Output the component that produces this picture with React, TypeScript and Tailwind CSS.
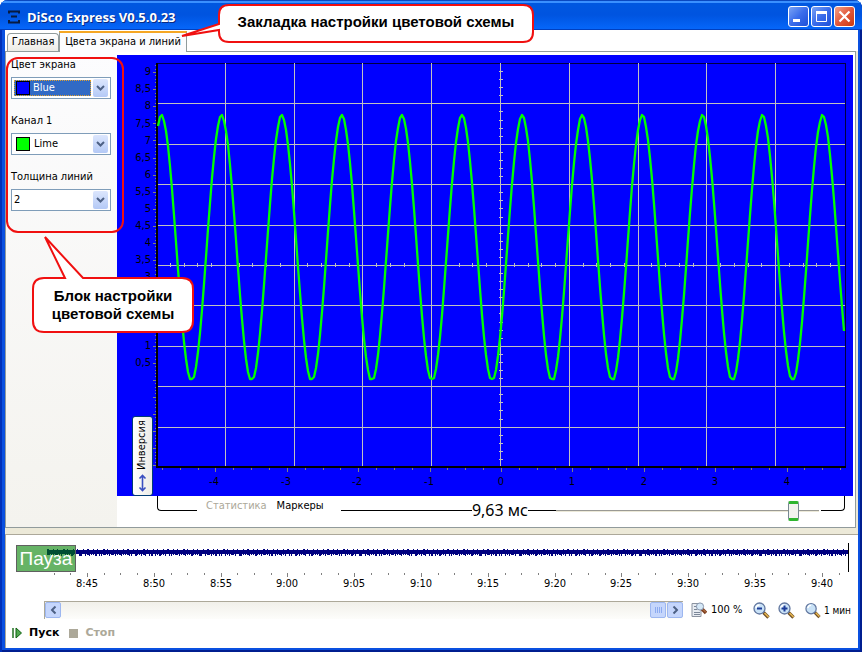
import type { ReactNode } from "react";

const UI_FONT = "font-['DejaVu_Sans_Condensed','DejaVu_Sans',sans-serif]";

const PLOT = { left: 40, top: 8, right: 728, bottom: 412 };
const SPLIT_X = 68.8;
const SPLIT_Y = 40.4;
const CENTER_X = 384;
const CENTER_Y = 210;

function range(from: number, to: number): number[] {
  return Array.from({ length: to - from + 1 }, (_, i) => from + i);
}

const LEVEL_LABELS = [...range(1, 2), ...range(6, 18)];

function signalPoints(): string {
  const points: string[] = [];
  for (let x = PLOT.left + 1; x <= PLOT.right; x += 2) {
    const phase = ((x - 44.5) / 60.1) * 2 * Math.PI;
    const ripple = Math.cos(phase) > 0.97 ? 3 * Math.cos(phase * 3) - 1 : 0;
    const y = 194 - 132 * Math.cos(phase) - ripple;
    points.push(`${x},${Math.round(Math.min(324, y))}`);
  }
  return points.join(" ");
}

function Oscillogram() {
  return (
    <svg viewBox="0 0 736 441" className="block w-full bg-[#0000ff]" role="img" aria-label="Осциллограмма">
      <g shapeRendering="crispEdges">
        <path d="M40 8.5H728.5V412" fill="none" stroke="#000040" />
        <g stroke="#c0c0c0">
          {range(1, 9).map((i) => (
            <line key={`v${i}`} x1={Math.round(PLOT.left + i * SPLIT_X) - 0.5} x2={Math.round(PLOT.left + i * SPLIT_X) - 0.5} y1="8" y2="412" />
          ))}
          {range(1, 9).map((i) => (
            <line key={`h${i}`} x1="40" x2="728" y1={Math.round(PLOT.top + i * SPLIT_Y) + 0.5} y2={Math.round(PLOT.top + i * SPLIT_Y) + 0.5} />
          ))}
          {range(1, 49).map((i) => (
            <line key={`cy${i}`} x1="382" x2="386" y1={Math.round(PLOT.top + i * 8.08) + 0.5} y2={Math.round(PLOT.top + i * 8.08) + 0.5} />
          ))}
          {range(1, 49).map((i) => (
            <line key={`cx${i}`} x1={Math.round(PLOT.left + i * 13.76) - 0.5} x2={Math.round(PLOT.left + i * 13.76) - 0.5} y1={CENTER_Y - 2} y2={CENTER_Y + 2} />
          ))}
        </g>
        <g stroke="#808080">
          {range(-2, 115).map((i) => {
            const y = Math.round(17 + i * 3.42) + 0.5;
            return y < 412 ? <line key={i} x1={i % 5 === 0 ? 36 : 38} x2="40" y1={y} y2={y} /> : null;
          })}
          {range(-19, 19).map((i) => {
            const x = Math.round(CENTER_X + i * 17.85) + 0.5;
            return <line key={i} x1={x} x2={x} y1="413" y2={i % 4 === 0 ? 417 : 415} />;
          })}
        </g>
        <path d="M40 8V412H729" fill="none" stroke="#000000" strokeWidth="2" />
      </g>
      <polyline points={signalPoints()} fill="none" stroke="#00ff00" strokeWidth="2.300" strokeLinejoin="round" />
      <g className={UI_FONT} fontSize="11" fill="#000000">
        {LEVEL_LABELS.map((i) => (
          <text key={i} x="34" y={Math.round(328 - i * 17.1)} textAnchor="end">
            {String(i / 2).replace(".", ",")}
          </text>
        ))}
        {range(-4, 4).map((i) => (
          <text key={i} x={Math.round(CENTER_X + i * 71.4) - (i < 0 ? 1 : 0)} y="430" textAnchor="middle">
            {i}
          </text>
        ))}
      </g>
    </svg>
  );
}

function Timeline() {
  const times = ["8:45", "8:50", "8:55", "9:00", "9:05", "9:10", "9:15", "9:20", "9:25", "9:30", "9:35", "9:40"];
  return (
    <svg viewBox="0 0 852 50" className="block w-full" role="img" aria-label="Запись сигнала">
      <g shapeRendering="crispEdges">
        <rect x="41" y="7" width="801" height="4" fill="#000080" />
        {range(0, 399).map((i) => (
          <rect key={i} x={41 + i * 2} y={(i * 7) % 5 < 2 ? 6 : 7} width={(i * 11) % 4 === 0 ? 2 : 1} height={(i * 5) % 7 < 5 ? 6 : 5} fill="#000080" />
        ))}
        <line x1="842.5" x2="842.5" y1="0" y2="29" stroke="#000000" />
        {range(-2, 45).map((i) => {
          const x = Math.round(81 + i * 16.7) + 0.5;
          return x < 842 ? <line key={i} x1={x} x2={x} y1="30" y2={i % 4 === 0 ? 34 : 32} stroke="#808080" /> : null;
        })}
      </g>
      <g className={UI_FONT} fontSize="11" textAnchor="middle">
        {times.map((time, i) => (
          <text key={time} x={Math.round(81 + i * 66.8)} y="44">
            {time}
          </text>
        ))}
      </g>
    </svg>
  );
}

function Chevron({ className }: { className: string }) {
  return (
    <svg viewBox="0 0 9 6" className={className} fill="none" stroke="#4d6185" strokeWidth="2">
      <path d="M1 1L4.500 4.500L8 1" />
    </svg>
  );
}

function Field({ id, label, value, swatch, active }: { id: string; label: string; value: string; swatch?: string; active?: boolean }) {
  return (
    <div className="flex flex-col gap-1">
      <label htmlFor={id} className="leading-4 whitespace-nowrap">
        {label}
      </label>
      <div className="relative flex h-[22px] items-center border border-[#7f9db9] bg-white p-[2px]">
        <select
          id={id}
          defaultValue={value}
          className={`min-w-0 flex-1 appearance-none outline-none ${swatch ? "pl-5" : ""} ${active ? "h-4 border border-dotted border-[#e0a030] bg-[#316ac5] pl-[18px] leading-[14px] text-white" : "h-4"}`}
        >
          <option>{value}</option>
        </select>
        {swatch && <span className={`pointer-events-none absolute left-1 size-[14px] border border-black ${swatch}`} />}
        <span className="pointer-events-none ml-[2px] flex h-[18px] w-[15px] items-center justify-center rounded-xs bg-linear-to-b from-[#dce6fd] to-[#b4c9f6]">
          <Chevron className="h-[6px] w-[9px]" />
        </span>
      </div>
    </div>
  );
}

function TitleButton({ label, close, children }: { label: string; close?: boolean; children: ReactNode }) {
  return (
    <button
      aria-label={label}
      className={`size-[21px] rounded-[3px] border border-white ${close ? "bg-linear-to-br from-[#f0a088] via-[#e2573a] to-[#c83808]" : "bg-linear-to-br from-[#7ba2f4] via-[#3a6ceb] to-[#1d4fd8]"}`}
    >
      <svg viewBox="0 0 19 19" className="size-full" fill="none" stroke="#ffffff">
        {children}
      </svg>
    </button>
  );
}

function Magnifier({ children }: { children?: ReactNode }) {
  return (
    <svg viewBox="0 0 17 17" className="size-[17px]">
      <path d="M10.500 10.500L15.500 15.500" stroke="#705028" strokeWidth="3.400" />
      <path d="M11.500 11L15.500 15" stroke="#e8b850" strokeWidth="1.600" />
      <circle cx="6.500" cy="6.500" r="5.500" fill="#c9e2f7" stroke="#62779f" strokeWidth="1.300" />
      <path d="M3 6A3.500 3.500 0 0 1 6.500 3" fill="none" stroke="#ffffff" strokeWidth="1.500" />
      {children}
    </svg>
  );
}

export default function App() {
  return (
    <div className={`relative flex min-h-screen flex-col overflow-hidden rounded-t-lg bg-[#0a50e0] pr-1 pb-1 pl-[5px] text-[11px] text-black shadow-[inset_2px_0_#0030b8,inset_-2px_0_#001e90,inset_0_-2px_#001e90] ${UI_FONT}`}>
      <header className="-mr-1 -ml-[5px] flex h-[30px] items-center bg-linear-to-b from-[#0058e0] via-[#0054e0] to-[#0668fc] pr-[7px] pl-[7px] shadow-[inset_0_1px_#0a48c0,inset_0_3px_#3a90ff,inset_0_-1px_#0040c0]">
        <svg viewBox="0 0 14 14" className="mt-1 h-[14px] w-[14px]" fill="none" stroke="#071a40" strokeWidth="2">
          <path d="M2 3.500V1.500H12V3.500M4 6.500H10M2 10V12.500H12V10" />
        </svg>
        <h1 className="mt-1 ml-[6px] flex-1 font-['Open_Sans',sans-serif] text-[13px] leading-4 font-bold text-white [text-shadow:1px_1px_#0a2a80]">DiSco Express V0.5.0.23</h1>
        <div className="mt-[3px] flex gap-[2px]">
          <TitleButton label="Свернуть">
            <path d="M4 13.500H11" strokeWidth="3" />
          </TitleButton>
          <TitleButton label="Развернуть">
            <path d="M4.500 5V14.500H14.500V5" />
            <path d="M4 5.500H15" strokeWidth="3" />
          </TitleButton>
          <TitleButton label="Закрыть" close>
            <path d="M4.500 4.500L14.500 14.500M14.500 4.500L4.500 14.500" strokeWidth="2.200" />
          </TitleButton>
        </div>
      </header>

      <nav role="tablist" className="flex h-[21px] items-end bg-white pl-[2px]">
        <button role="tab" aria-selected="false" className="h-[18px] w-[52px] rounded-t-sm border border-b-0 border-[#919b9c] bg-linear-to-b from-white to-[#ecebe6] text-center">
          Главная
        </button>
        <button role="tab" aria-selected="true" className="relative -mb-px h-[21px] w-32 border-x border-t-2 border-x-[#919b9c] border-t-[#f5a623] bg-[#fcfcfe] text-center whitespace-nowrap">
          Цвета экрана и линий
        </button>
      </nav>

      <main className="bg-[#ece9d8] pr-[2px] pb-[6px]">
        <div className="flex border border-[#919b9c] bg-white">
          <aside className="w-[111px] shrink-0 bg-linear-to-b from-[#fcfcfe] to-[#f4f3ee] pt-[5px] pr-[6px] pl-[5px]">
            <div className="flex flex-col gap-[14px]">
              <Field id="screen" label="Цвет экрана" value="Blue" swatch="bg-[#0000ff]" active />
              <Field id="channel" label="Канал 1" value="Lime" swatch="bg-[#00ff00]" />
              <Field id="thickness" label="Толщина линий" value="2" />
            </div>
          </aside>
          <section className="min-w-0 flex-1 pt-[3px] pr-[2px]">
            <div className="relative">
              <Oscillogram />
              <button className="absolute bottom-0 left-[15px] flex h-20 w-[21px] rotate-180 items-center rounded-[3px] border border-[#003c74] bg-linear-to-r from-[#ecebe6] to-white px-px [writing-mode:vertical-rl]">
                <span className="flex h-full items-center gap-1 pt-[2px]">
                  <svg viewBox="0 0 9 18" className="h-[18px] w-[9px]" fill="none" stroke="#3a4fc0" strokeWidth="1.600">
                    <path d="M4.500 1V17M1.500 4.500L4.500 1.500L7.500 4.500M1.500 13.500L4.500 16.500L7.500 13.500" />
                  </svg>
                  Инверсия
                </span>
              </button>
            </div>
            <div className="flex h-[31px] items-start pr-2 pl-10">
              <div className="h-[15px] w-10 rounded-bl-sm border-b border-l border-black" />
              <div className="flex w-36 gap-[10px] pl-[9px] leading-5">
                <button disabled className="text-[#aca899]">
                  Статистика
                </button>
                <button>Маркеры</button>
              </div>
              <div className="h-[15px] flex-1 border-b border-black" />
              <label htmlFor="sweep" className="font-['Noto_Sans',sans-serif] text-[16px] leading-7">
                9,63 мс
              </label>
              <div className="h-[15px] w-7 border-b border-black" />
              <input
                id="sweep"
                type="range"
                min="0"
                max="100"
                defaultValue="92"
                className="mt-1 h-[22px] w-[263px] appearance-none bg-[linear-gradient(#9a9a94_50%,#ece9d8_50%)] bg-[length:100%_2px] bg-center bg-no-repeat [&::-webkit-slider-thumb]:h-5 [&::-webkit-slider-thumb]:w-[11px] [&::-webkit-slider-thumb]:appearance-none [&::-webkit-slider-thumb]:rounded-[2px] [&::-webkit-slider-thumb]:border-x [&::-webkit-slider-thumb]:border-y-[3px] [&::-webkit-slider-thumb]:border-x-[#778892] [&::-webkit-slider-thumb]:border-y-[#2fb52f] [&::-webkit-slider-thumb]:bg-[#f3f3ef]"
              />
              <div className="ml-[2px] h-[15px] w-6 rounded-br-sm border-r border-b border-black" />
            </div>
          </section>
        </div>
      </main>

      <footer className="flex flex-1 flex-col border-t border-l border-[#aca899] bg-white pt-2">
        <div className="relative">
          <Timeline />
          <div className="absolute top-[2px] left-[10px] h-[27px] w-[60px] border border-[#606060] bg-[#008000]/60 text-center font-['Liberation_Sans',sans-serif] text-[19px] leading-[26px] text-white">Пауза</div>
        </div>
        <div className="mt-2 flex h-[18px] items-center pr-[7px] pl-[38px]">
          <div className="flex h-[18px] flex-1 border-t border-l border-[#aca899] bg-linear-to-b from-[#f1f0ea] to-[#fdfdfb]">
            <button aria-label="Назад" className="flex size-4 items-center justify-center rounded-xs border border-[#9db7f0] bg-[#c5d6fc]">
              <Chevron className="h-[6px] w-[9px] rotate-90" />
            </button>
            <div className="flex-1" />
            <div className="flex h-4 w-4 items-center justify-center gap-px rounded-xs border border-[#9db7f0] bg-[#c5d6fc]">
              <i className="h-[6px] w-px bg-[#8caaf0]" />
              <i className="h-[6px] w-px bg-[#8caaf0]" />
              <i className="h-[6px] w-px bg-[#8caaf0]" />
              <i className="h-[6px] w-px bg-[#8caaf0]" />
            </div>
            <button aria-label="Вперёд" className="ml-px flex size-4 items-center justify-center rounded-xs border border-[#9db7f0] bg-[#c5d6fc]">
              <Chevron className="h-[6px] w-[9px] -rotate-90" />
            </button>
          </div>
          <button className="ml-2 flex w-[62px] items-center gap-1 whitespace-nowrap">
            <svg viewBox="0 0 16 16" className="size-4 shrink-0">
              <path d="M1 1.500H10V14.500H1Z" fill="#e8ecf2" stroke="#8b93a0" />
              <path d="M3 4.500H6M3 7.500H6M3 10.500H9M3 12.500H9" stroke="#7b8798" />
              <path d="M11 7L15 11" stroke="#7a3d20" strokeWidth="3.400" />
              <path d="M12 7.500L15 10.500" stroke="#d08a50" />
              <circle cx="9" cy="4.500" r="3.600" fill="#d5e8f7" stroke="#8896ac" />
            </svg>
            100 %
          </button>
          <button aria-label="Уменьшить">
            <Magnifier>
              <path d="M4 6.500H9" stroke="#1c3c98" strokeWidth="2" />
            </Magnifier>
          </button>
          <button aria-label="Увеличить" className="ml-2">
            <Magnifier>
              <path d="M3.500 6.500H9.500M6.500 3.500V9.500" stroke="#1c3c98" strokeWidth="2" />
            </Magnifier>
          </button>
          <button className="ml-[10px] flex w-[46px] items-center gap-[3px] text-[10px] whitespace-nowrap">
            <Magnifier />1 мин
          </button>
        </div>
        <div className="mt-[6px] flex items-center gap-[10px] pl-[6px] font-['DejaVu_Sans',sans-serif] text-[11px] leading-4 font-bold">
          <button className="flex items-center gap-[7px]">
            <svg viewBox="0 0 10 12" className="h-3 w-[10px]">
              <path d="M1 1V11" stroke="#207020" strokeWidth="1.500" />
              <path d="M4 1L9.500 6L4 11Z" fill="#50a850" stroke="#106010" />
            </svg>
            Пуск
          </button>
          <button disabled className="flex items-center gap-[7px] text-[#aca899]">
            <span className="size-[9px] bg-[#aca899]" />
            Стоп
          </button>
        </div>
      </footer>

      <div className="pointer-events-none absolute top-[57px] left-[6px] h-44 w-[118px] rounded-xl border-2 border-[#f01010]" />

      <div className="pointer-events-none absolute top-1 left-[180px] h-[39px] w-[354px]">
        <svg viewBox="0 0 354 39" className="absolute size-full" fill="#ffffff" stroke="#f01010" strokeWidth="2">
          <path d="M49 1H343Q353 1 353 11V28Q353 38 343 38H49Q39 38 39 28V26L2 32L39 20V11Q39 1 49 1Z" />
        </svg>
        <p className="relative pt-2 pl-[38px] text-center font-['Liberation_Sans',sans-serif] text-[15px] leading-5 font-bold whitespace-nowrap">Закладка настройки цветовой схемы</p>
      </div>

      <div className="pointer-events-none absolute top-[235px] left-8 h-[98px] w-[162px]">
        <svg viewBox="0 0 162 98" className="absolute size-full" fill="#ffffff" stroke="#f01010" strokeWidth="2">
          <path d="M12 43H33L13 2L51 43H150Q161 43 161 54V86Q161 97 150 97H12Q1 97 1 86V54Q1 43 12 43Z" />
        </svg>
        <p className="relative pt-[52px] text-center font-['Liberation_Sans',sans-serif] text-[15px] leading-[18px] font-bold">
          Блок настройки
          <br />
          цветовой схемы
        </p>
      </div>
    </div>
  );
}
